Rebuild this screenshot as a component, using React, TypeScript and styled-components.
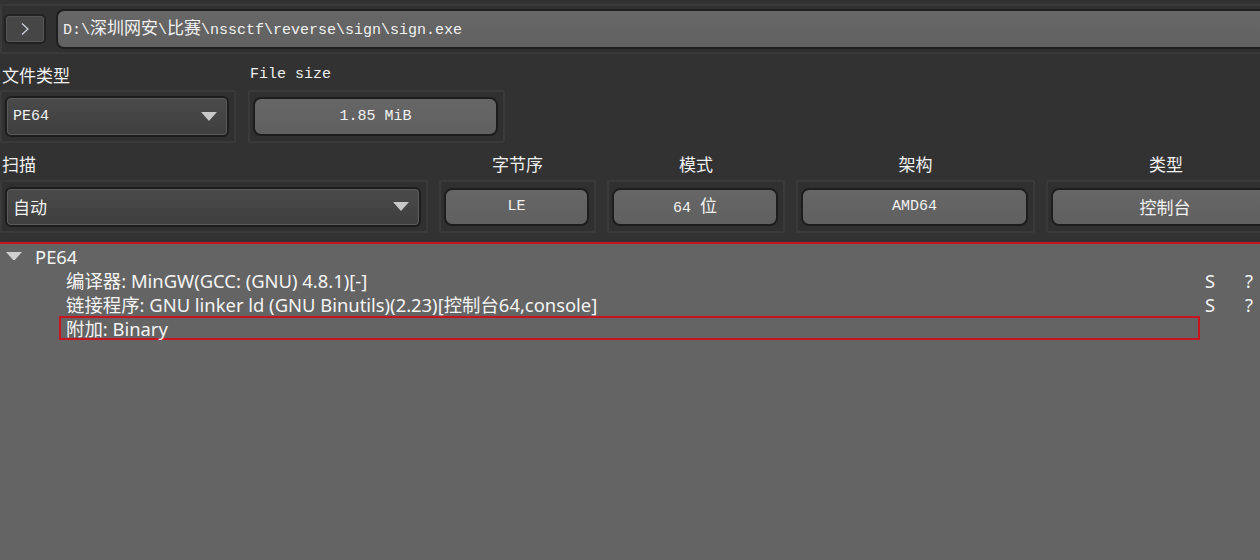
import React from "react";
import styled, { createGlobalStyle } from "styled-components";

const Global = createGlobalStyle`
  html, body { margin: 0; padding: 0; background: #323232; }
  body { width: 1260px; height: 560px; overflow: hidden; }
`;

const MONO = `"Liberation Mono", "Noto Sans CJK SC", monospace`;
const CJK = `"Noto Sans CJK SC", "Liberation Mono", sans-serif`;
const UI = `"Noto Sans", "Noto Sans CJK SC", sans-serif`;

const Shell = styled.div`
  width: 1260px;
  height: 560px;
  overflow: hidden;
  background: #323232;
  display: flex;
  flex-direction: column;
  color: #f0f0f0;
`;

const Wide = styled.div`
  width: 1300px;
  display: flex;
  flex-direction: column;
`;

const Frame = styled.div<{ $w?: number }>`
  box-sizing: border-box;
  width: ${(p) => (p.$w ? `${p.$w}px` : "auto")};
  height: 53px;
  border: 2px solid #3a3a3a;
  border-radius: 2px;
  background: #303030;
  display: flex;
  align-items: center;
  padding: 0 5px 0 3px;
  gap: 10px;
`;

const TopFrame = styled(Frame)`
  margin-top: 4px;
  height: 50px;
  padding: 0 0 0 2px;
  gap: 10px;
`;

const ToolButton = styled.div`
  box-sizing: border-box;
  width: 42px;
  height: 30px;
  border: 2px solid #222;
  border-radius: 5px;
  background: #464646;
  box-shadow: inset 0 0 0 1px #555;
  display: flex;
  align-items: center;
  justify-content: center;
`;

const PathInput = styled.div`
  box-sizing: border-box;
  flex: 1;
  height: 40px;
  border: 2px solid #1f1f1f;
  border-radius: 8px 0 0 8px;
  border-right: none;
  background: linear-gradient(#676767, #616161);
  display: flex;
  align-items: center;
  padding-left: 5px;
  font-family: ${MONO};
  font-size: 15px;
  line-height: 18px;
  color: #f2f2f2;
  white-space: pre;
`;

const Mixed = styled.span`
  line-height: 18px;
`;

const Cjk = styled.span`
  font-family: ${CJK};
  font-size: 17px;
  line-height: 18px;
`;

const Row = styled.div<{ $gap: number }>`
  display: flex;
  gap: ${(p) => p.$gap}px;
`;

const Column = styled.div<{ $w: number }>`
  width: ${(p) => p.$w}px;
  display: flex;
  flex-direction: column;
`;

const Label = styled.div<{ $center?: boolean; $h: number; $mono?: boolean }>`
  box-sizing: border-box;
  height: ${(p) => p.$h}px;
  padding-top: ${(p) => (p.$h === 36 ? 4 : 3)}px;
  padding-left: ${(p) => (p.$center ? 0 : 2)}px;
  display: flex;
  align-items: center;
  justify-content: ${(p) => (p.$center ? "center" : "flex-start")};
  font-family: ${(p) => (p.$mono ? MONO : CJK)};
  font-size: ${(p) => (p.$mono ? 15 : 17)}px;
  color: #f0f0f0;
`;

const Combo = styled.div<{ $h: number }>`
  box-sizing: border-box;
  flex: 1;
  height: ${(p) => p.$h}px;
  border: 2px solid #1d1d1d;
  border-radius: 6px;
  background: linear-gradient(#4a4a4a, #3f3f3f);
  box-shadow: inset 0 0 0 1px #5b5b5b;
  display: flex;
  align-items: center;
  justify-content: space-between;
  padding: 0 10px 0 6px;
  font-family: ${MONO};
  font-size: 15px;
  color: #f2f2f2;
`;

const ComboText = styled.span<{ $cjk?: boolean }>`
  font-family: ${(p) => (p.$cjk ? CJK : MONO)};
  font-size: ${(p) => (p.$cjk ? 17 : 15)}px;
`;

const ValueBox = styled.div<{ $h: number }>`
  box-sizing: border-box;
  flex: 1;
  height: ${(p) => p.$h}px;
  border: 2px solid #1d1d1d;
  border-radius: 8px;
  background: linear-gradient(#666, #606060);
  display: flex;
  align-items: center;
  justify-content: center;
  font-family: ${MONO};
  font-size: 15px;
  line-height: 18px;
  color: #f2f2f2;
  white-space: pre;
`;

const Tree = styled.div`
  margin-top: 9px;
  flex: 1;
  border-top: 2px solid #c8141f;
  background: #646464;
  display: flex;
  flex-direction: column;
  font-family: ${UI};
  font-size: 18.4px;
  color: #f4f4f4;
`;

const TreeRow = styled.div`
  display: flex;
  height: 24px;
  align-items: center;
`;

const Expander = styled.div`
  width: 35px;
  display: flex;
  padding-left: 6px;
  box-sizing: border-box;
`;

const Indent = styled.div`
  width: 59px;
  flex-shrink: 0;
`;

const MainCell = styled.div<{ $sel?: boolean }>`
  box-sizing: border-box;
  width: 1141px;
  height: 24px;
  border: 2px solid ${(p) => (p.$sel ? "#c8141f" : "transparent")};
  padding-left: 5px;
  display: flex;
  align-items: center;
  white-space: nowrap;
`;

const SideCell = styled.div<{ $pad: number }>`
  box-sizing: border-box;
  width: 30px;
  padding-left: ${(p) => p.$pad}px;
`;

const Down = ({ size, color }: { size: number; color: string }) => (
  <svg width={size} height={size * 0.56} viewBox="0 0 16 9">
    <polygon points="0,0 16,0 8,9" fill={color} />
  </svg>
);

export default function App() {
  return (
    <Shell>
      <Global />
      <Wide>
        <TopFrame>
          <ToolButton>
            <svg width="8" height="12" viewBox="0 0 8 12">
              <polyline points="1,0.5 7,6 1,11.5" fill="none" stroke="#cfd6e4" strokeWidth="1.2" />
            </svg>
          </ToolButton>
          <PathInput>
            <Mixed>
              D:\<Cjk>深圳网安</Cjk>\<Cjk>比赛</Cjk>\nssctf\reverse\sign\sign.exe
            </Mixed>
          </PathInput>
        </TopFrame>

        <Row $gap={12}>
          <Column $w={236}>
            <Label $h={36}>文件类型</Label>
            <Frame>
              <Combo $h={41}>
                <ComboText>PE64</ComboText>
                <Down size={16} color="#c8c8c8" />
              </Combo>
            </Frame>
          </Column>
          <Column $w={257}>
            <Label $h={36} $mono>File size</Label>
            <Frame>
              <ValueBox $h={39}>1.85 MiB</ValueBox>
            </Frame>
          </Column>
        </Row>

        <Row $gap={11}>
          <Column $w={428}>
            <Label $h={37}>扫描</Label>
            <Frame>
              <Combo $h={40}>
                <ComboText $cjk>自动</ComboText>
                <Down size={16} color="#c8c8c8" />
              </Combo>
            </Frame>
          </Column>
          <Column $w={157}>
            <Label $h={37} $center>字节序</Label>
            <Frame>
              <ValueBox $h={38}>LE</ValueBox>
            </Frame>
          </Column>
          <Column $w={178}>
            <Label $h={37} $center>模式</Label>
            <Frame>
              <ValueBox $h={38}>
                <Mixed>64 <Cjk>位</Cjk></Mixed>
              </ValueBox>
            </Frame>
          </Column>
          <Column $w={239}>
            <Label $h={37} $center>架构</Label>
            <Frame>
              <ValueBox $h={38}>AMD64</ValueBox>
            </Frame>
          </Column>
          <Column $w={240}>
            <Label $h={37} $center>类型</Label>
            <Frame>
              <ValueBox $h={38}><Cjk>控制台</Cjk></ValueBox>
            </Frame>
          </Column>
        </Row>
      </Wide>

      <Tree>
        <TreeRow>
          <Expander>
            <Down size={16} color="#cfcfcf" />
          </Expander>
          <span>PE64</span>
        </TreeRow>
        <TreeRow>
          <Indent />
          <MainCell>编译器: MinGW(GCC: (GNU) 4.8.1)[-]</MainCell>
          <SideCell $pad={5}>S</SideCell>
          <SideCell $pad={15}>?</SideCell>
        </TreeRow>
        <TreeRow>
          <Indent />
          <MainCell>链接程序: GNU linker ld (GNU Binutils)(2.23)[控制台64,console]</MainCell>
          <SideCell $pad={5}>S</SideCell>
          <SideCell $pad={15}>?</SideCell>
        </TreeRow>
        <TreeRow>
          <Indent />
          <MainCell $sel>附加: Binary</MainCell>
        </TreeRow>
      </Tree>
    </Shell>
  );
}
